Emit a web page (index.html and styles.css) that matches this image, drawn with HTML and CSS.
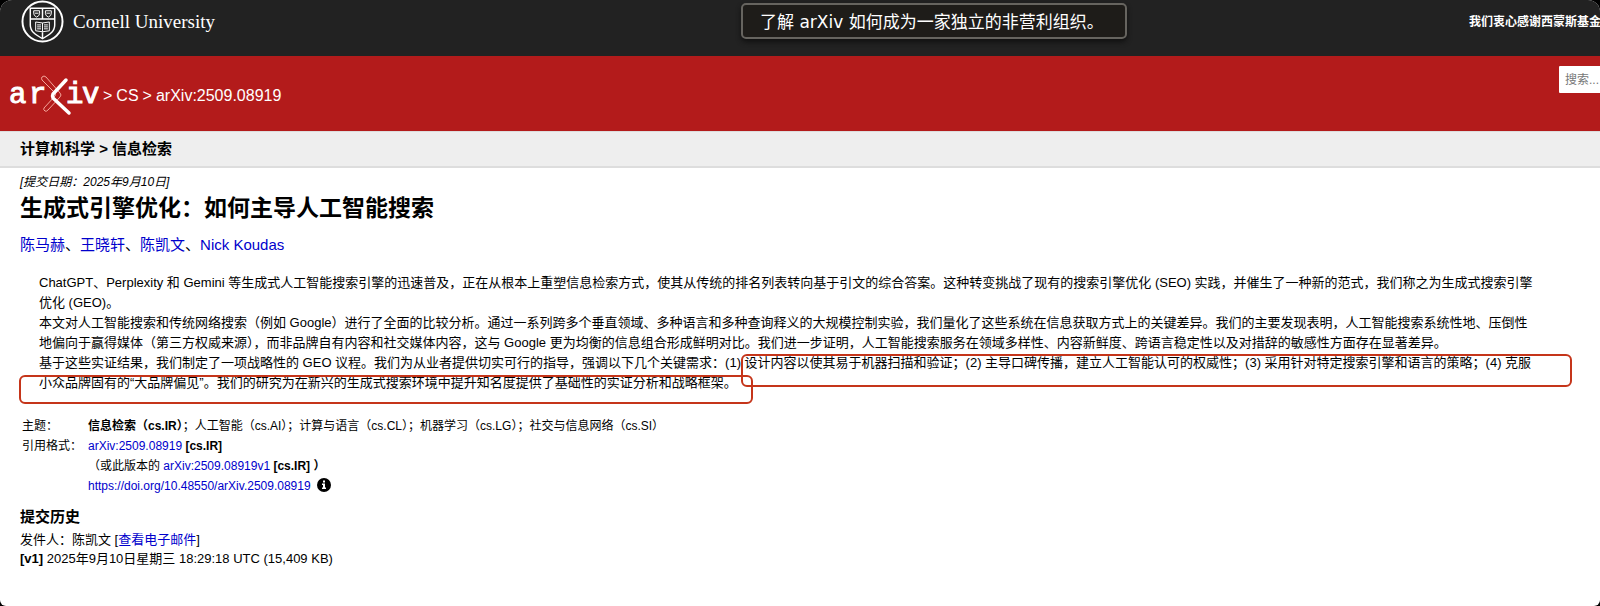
FILE: index.html
```html
<!DOCTYPE html>
<html lang="zh-CN">
<head>
    <meta charset="UTF-8">
    <title>生成式引擎优化：如何主导人工智能搜索</title>
    <meta name="viewport" content="width=device-width, initial-scale=1.0">
    <link rel="stylesheet" href="styles.css">
</head>
<body>
    <div class="page">
        <header class="top-bar">
            <a class="cornell" href="#">
                <svg class="seal" viewBox="0 0 44 44" fill="none" stroke="#fff" aria-hidden="true">
                    <circle cx="22" cy="22" r="20.5" stroke-width="2"/>
                    <path d="M9.5 8.500h25v17c0 7-6 10.500-12.500 14C15.500 36 9.500 32.500 9.500 25.500z" stroke-width="1.500"/>
                    <path d="M9.500 19.500h25M22 8.500v11M22 33v6" stroke-width="1.500"/>
                    <path d="M13 11h6v3q0 2-3 3.500-3-1.500-3-3.500zM25 11h6v3q0 2-3 3.500-3-1.500-3-3.500zM14 13.500h4M26 13.500h4"/>
                    <path d="M15 22.500l7 1 7-1v9l-7 1-7-1zM22 23.500v9M16.500 25.500h4M16.500 27.500h4M16.500 29.500h4M23.500 25.500h4M23.500 27.500h4M23.500 29.500h4"/>
                </svg>
                <span>Cornell University</span>
            </a>
            <a class="banner" href="#">了解 arXiv 如何成为一家独立的非营利组织。</a>
            <a class="thanks" href="#">我们衷心感谢西蒙斯基金会</a>
        </header>

        <div class="red-bar">
            <nav class="breadcrumbs" aria-label="arXiv">
                <a href="#" aria-label="arXiv">
                    <svg class="logo" viewBox="0 0 90 42" aria-hidden="true">
                        <g class="logo-text">
                            <text x="0" y="28">a</text>
                            <text x="20" y="28">r</text>
                            <text x="57" y="28">i</text>
                            <text x="73" y="28">v</text>
                        </g>
                        <path d="M33 2q2-2 4 0l14 16q2 2 0 4L39 35q-2 2-3 1-2-1-1-3l11-12q1-2 0-3L33 5q-1-2 0-3z" fill="none" stroke="#f3a79c"/>
                        <path d="M57 5L44 19q-1 2 0 4l16 15" fill="none" stroke="#fff" stroke-width="3.500" stroke-linecap="round"/>
                    </svg>
                </a>
                <span>&gt;</span>
                <a href="#">CS</a>
                <span>&gt;</span>
                <span>arXiv:2509.08919</span>
            </nav>
            <form class="search">
                <input type="text" placeholder="搜索..." aria-label="搜索">
            </form>
        </div>

        <h1 class="subject-bar">计算机科学 &gt; 信息检索</h1>

        <main>
            <div class="dateline">[提交日期：2025年9月10日]</div>
            <h2 class="title">生成式引擎优化：如何主导人工智能搜索</h2>
            <div class="authors"><a href="#">陈马赫</a>、<a href="#">王晓轩</a>、<a href="#">陈凯文</a>、<a href="#">Nick Koudas</a></div>

            <blockquote class="abstract">
                <p>ChatGPT、Perplexity 和 Gemini 等生成式人工智能搜索引擎的迅速普及，正在从根本上重塑信息检索方式，使其从传统的排名列表转向基于引文的综合答案。这种转变挑战了现有的搜索引擎优化 (SEO) 实践，并催生了一种新的范式，我们称之为生成式搜索引擎优化 (GEO)。</p>
                <p>本文对人工智能搜索和传统网络搜索（例如 Google）进行了全面的比较分析。通过一系列跨多个垂直领域、多种语言和多种查询释义的大规模控制实验，我们量化了这些系统在信息获取方式上的关键差异。我们的主要发现表明，人工智能搜索系统性地、压倒性地偏向于赢得媒体（第三方权威来源），而非品牌自有内容和社交媒体内容，这与 Google 更为均衡的信息组合形成鲜明对比。我们进一步证明，人工智能搜索服务在领域多样性、内容新鲜度、跨语言稳定性以及对措辞的敏感性方面存在显著差异。</p>
                <p>基于这些实证结果，我们制定了一项战略性的 GEO 议程。我们为从业者提供切实可行的指导，强调以下几个关键需求：(1) 设计内容以使其易于机器扫描和验证；(2) 主导口碑传播，建立人工智能认可的权威性；(3) 采用针对特定搜索引擎和语言的策略；(4) 克服小众品牌固有的“大品牌偏见”。我们的研究为在新兴的生成式搜索环境中提升知名度提供了基础性的实证分析和战略框架。</p>
                <span class="mark mark-first"></span>
                <span class="mark mark-second"></span>
            </blockquote>

            <table class="meta">
                <tr>
                    <th scope="row">主题：</th>
                    <td><b>信息检索（cs.IR）</b>；人工智能（cs.AI）；计算与语言（cs.CL）；机器学习（cs.LG）；社交与信息网络（cs.SI）</td>
                </tr>
                <tr>
                    <th scope="row">引用格式：</th>
                    <td><a href="#">arXiv:2509.08919</a> <b>[cs.IR]</b></td>
                </tr>
                <tr>
                    <td></td>
                    <td>（或此版本的 <a href="#">arXiv:2509.08919v1</a> <b>[cs.IR] ）</b></td>
                </tr>
                <tr>
                    <td></td>
                    <td>
                        <a href="#">https://doi.org/10.48550/arXiv.2509.08919</a>
                        <svg class="info" viewBox="0 0 14 14" aria-hidden="true">
                            <circle cx="7" cy="7" r="7"/>
                            <path d="M6 2.500h2v2H6zM5 5.500h3v4h1v1.500H5V9.500h1V7H5z" fill="#fff"/>
                        </svg>
                    </td>
                </tr>
            </table>

            <section class="history">
                <h2>提交历史</h2>
                <div>发件人：陈凯文 [<a href="#">查看电子邮件</a>]</div>
                <div><b>[v1]</b> 2025年9月10日星期三 18:29:18 UTC (15,409 KB)</div>
            </section>
        </main>
    </div>
</body>
</html>
```
FILE: styles.css
```css
html {
    background-color: #000;
}

body {
    margin: 0;
    font-family: "Liberation Sans", "Noto Sans CJK SC", sans-serif;
    font-size: 13px;
    color: #000;
}

a {
    color: #0000cc;
    text-decoration: none;
}

.page {
    min-height: 100vh;
    background-color: #fff;
    border-radius: 12px 12px 6px 6px;
    overflow: hidden;
}

/* Cornell header */
.top-bar {
    display: grid;
    grid-template-columns: 1fr 1fr 131px;
    align-items: start;
    height: 56px;
    padding-left: 13px;
    background-color: #222;
}

.top-bar a {
    color: #fff;
}

.cornell {
    display: flex;
    align-items: center;
    gap: 9px;
    padding-left: 8px;
    font-family: "Liberation Serif", serif;
    font-size: 19px;
}

.seal {
    width: 43px;
    height: 43px;
}

.banner {
    justify-self: start;
    margin-top: 3px;
    padding: 2px 21px 0 17px;
    border: 2px solid #66645f;
    border-radius: 5px;
    background-color: #1e1c19;
    box-shadow: 0 3px 5px #111;
    font-family: "DejaVu Sans", "Noto Sans CJK SC", sans-serif;
    font-size: 17px;
    line-height: 30px;
    white-space: nowrap;
}

.thanks {
    font-size: 12px;
    font-weight: bold;
    line-height: 44px;
    white-space: nowrap;
}

/* arXiv header */
.red-bar {
    display: flex;
    justify-content: space-between;
    height: 75px;
    background-color: #b31b1b;
}

.breadcrumbs {
    display: flex;
    align-items: center;
    gap: 4px;
    padding: 5px 0 0 9px;
    font-size: 16px;
    color: #fff;
}

.breadcrumbs a {
    color: #fff;
}

.logo {
    display: block;
    width: 90px;
    height: 42px;
}

.logo-text {
    font-family: "Liberation Mono", monospace;
    font-size: 29px;
    fill: #fff;
    stroke: #fff;
}

.search {
    flex: none;
    width: 41px;
    padding-top: 10px;
}

.search input {
    box-sizing: border-box;
    width: 200px;
    height: 27px;
    padding: 0 6px;
    border: 0;
    border-radius: 1px;
    font-family: inherit;
    font-size: 12px;
}

.search input::placeholder {
    color: #777;
}

.subject-bar {
    margin: 0;
    padding-left: 20px;
    border-top: 1px solid #ddd;
    border-bottom: 2px solid #ddd;
    background-color: #eee;
    font-size: 15px;
    line-height: 34px;
}

/* Paper */
.dateline {
    padding: 4px 20px 0;
    font-size: 12px;
    font-style: italic;
    line-height: 20px;
}

.title {
    margin: 0;
    padding: 0 20px;
    font-size: 23px;
    line-height: 32px;
}

.authors {
    padding: 9px 20px 8px;
    font-size: 15px;
    line-height: 24px;
}

.abstract {
    position: relative;
    margin: 8px 0 0;
    padding: 0 63px 0 39px;
    line-height: 20px;
}

.abstract p {
    margin: 0;
}

/* Hand-drawn frames over the abstract */
.mark {
    position: absolute;
    box-sizing: border-box;
    border: 2px solid #c5351a;
    border-radius: 6px;
}

.mark-first {
    top: 81px;
    left: 741px;
    right: 28px;
    height: 33px;
}

.mark-second {
    top: 102px;
    left: 19px;
    width: 734px;
    height: 29px;
}

.meta {
    margin: 23px 0 0 20px;
    border-collapse: collapse;
    font-size: 12px;
    line-height: 20px;
}

.meta th,
.meta td {
    padding: 0 2px;
    font-weight: normal;
    text-align: left;
}

.meta th {
    width: 62px;
}

.info {
    width: 14px;
    height: 14px;
    margin-left: 3px;
    vertical-align: -2px;
}

.history {
    padding: 8px 20px;
    line-height: 19px;
}

.history h2 {
    margin: 0;
    font-size: 15px;
    line-height: 26px;
}
```
